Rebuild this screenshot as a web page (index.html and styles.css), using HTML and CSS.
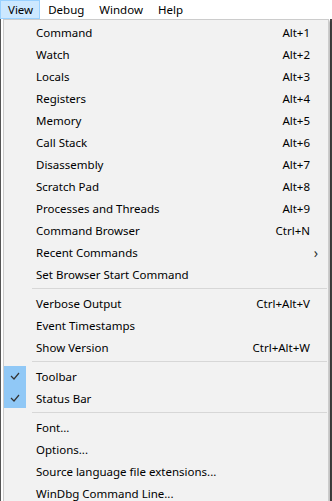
FILE: index.html
```html
<!DOCTYPE html>
<html lang="en">
<head>
  <meta charset="UTF-8">
  <title>WinDbg – View menu</title>
  <link rel="stylesheet" href="styles.css">
</head>
<body>
  <div class="menubar">
    <span class="top active">View</span>
    <span class="top">Debug</span>
    <span class="top">Window</span>
    <span class="top">Help</span>
  </div>

  <div class="desk">
    <div class="menu">
      <div class="item"><span class="label">Command</span><span class="key">Alt+1</span></div>
      <div class="item"><span class="label">Watch</span><span class="key">Alt+2</span></div>
      <div class="item"><span class="label">Locals</span><span class="key">Alt+3</span></div>
      <div class="item"><span class="label">Registers</span><span class="key">Alt+4</span></div>
      <div class="item"><span class="label">Memory</span><span class="key">Alt+5</span></div>
      <div class="item"><span class="label">Call Stack</span><span class="key">Alt+6</span></div>
      <div class="item"><span class="label">Disassembly</span><span class="key">Alt+7</span></div>
      <div class="item"><span class="label">Scratch Pad</span><span class="key">Alt+8</span></div>
      <div class="item"><span class="label">Processes and Threads</span><span class="key">Alt+9</span></div>
      <div class="item"><span class="label">Command Browser</span><span class="key">Ctrl+N</span></div>
      <div class="item"><span class="label">Recent Commands</span><span class="arrow">&#8250;</span></div>
      <div class="item"><span class="label">Set Browser Start Command</span></div>
      <div class="sep"></div>
      <div class="item"><span class="label">Verbose Output</span><span class="key">Ctrl+Alt+V</span></div>
      <div class="item"><span class="label">Event Timestamps</span></div>
      <div class="item"><span class="label">Show Version</span><span class="key">Ctrl+Alt+W</span></div>
      <div class="sep"></div>
      <div class="checks">
        <div class="item checked">
          <svg class="tick" width="10" height="8" viewBox="0 0 10 8"><path d="M1 4 L4 7 L9 1" fill="none" stroke="#333" stroke-width="1.2"/></svg>
          <span class="label">Toolbar</span>
        </div>
        <div class="item checked">
          <svg class="tick" width="10" height="8" viewBox="0 0 10 8"><path d="M1 4 L4 7 L9 1" fill="none" stroke="#333" stroke-width="1.2"/></svg>
          <span class="label">Status Bar</span>
        </div>
      </div>
      <div class="sep"></div>
      <div class="item"><span class="label">Font...</span></div>
      <div class="item"><span class="label">Options...</span></div>
      <div class="item"><span class="label">Source language file extensions...</span></div>
      <div class="item"><span class="label">WinDbg Command Line...</span></div>
    </div>
  </div>
</body>
</html>
```

FILE: styles.css
```css
body { margin: 0; background: #fff; font-family: "Noto Sans", "Segoe UI", sans-serif; font-size: 11.5px; color: #000; overflow: hidden; }
.menubar { display: flex; height: 19px; align-items: stretch; background: #fff; }
.top { display: flex; align-items: center; padding: 0 6px 0 7px; border: 1px solid transparent; }
.top.active { background: #cce8ff; border-color: #99d1ff; }
.desk { height: 482px; border-left: 1px solid #555; border-right: 2px solid #444; box-sizing: border-box; }
.menu { margin-left: 2px; width: 326px; height: 490px; box-sizing: border-box; background: #f2f2f2; border: 1px solid #ccc; padding-top: 1px; box-shadow: 2px 2px 2px rgba(0,0,0,0.25); }
.item { position: relative; display: flex; align-items: center; height: 22px; padding: 0 18px 0 32px; }
.label { flex: 1; white-space: nowrap; }
.key { white-space: nowrap; }
.arrow { margin-right: -8px; font-size: 14px; color: #333; }
.sep { height: 1px; background: #d7d7d7; margin: 3px 1px 3px 28px; }
.checks { position: relative; }
.checks::before { content: ""; position: absolute; left: 0; top: 1px; bottom: 1px; width: 22px; background: #90c8f6; }
.tick { position: absolute; left: 6px; top: 7px; }
```
